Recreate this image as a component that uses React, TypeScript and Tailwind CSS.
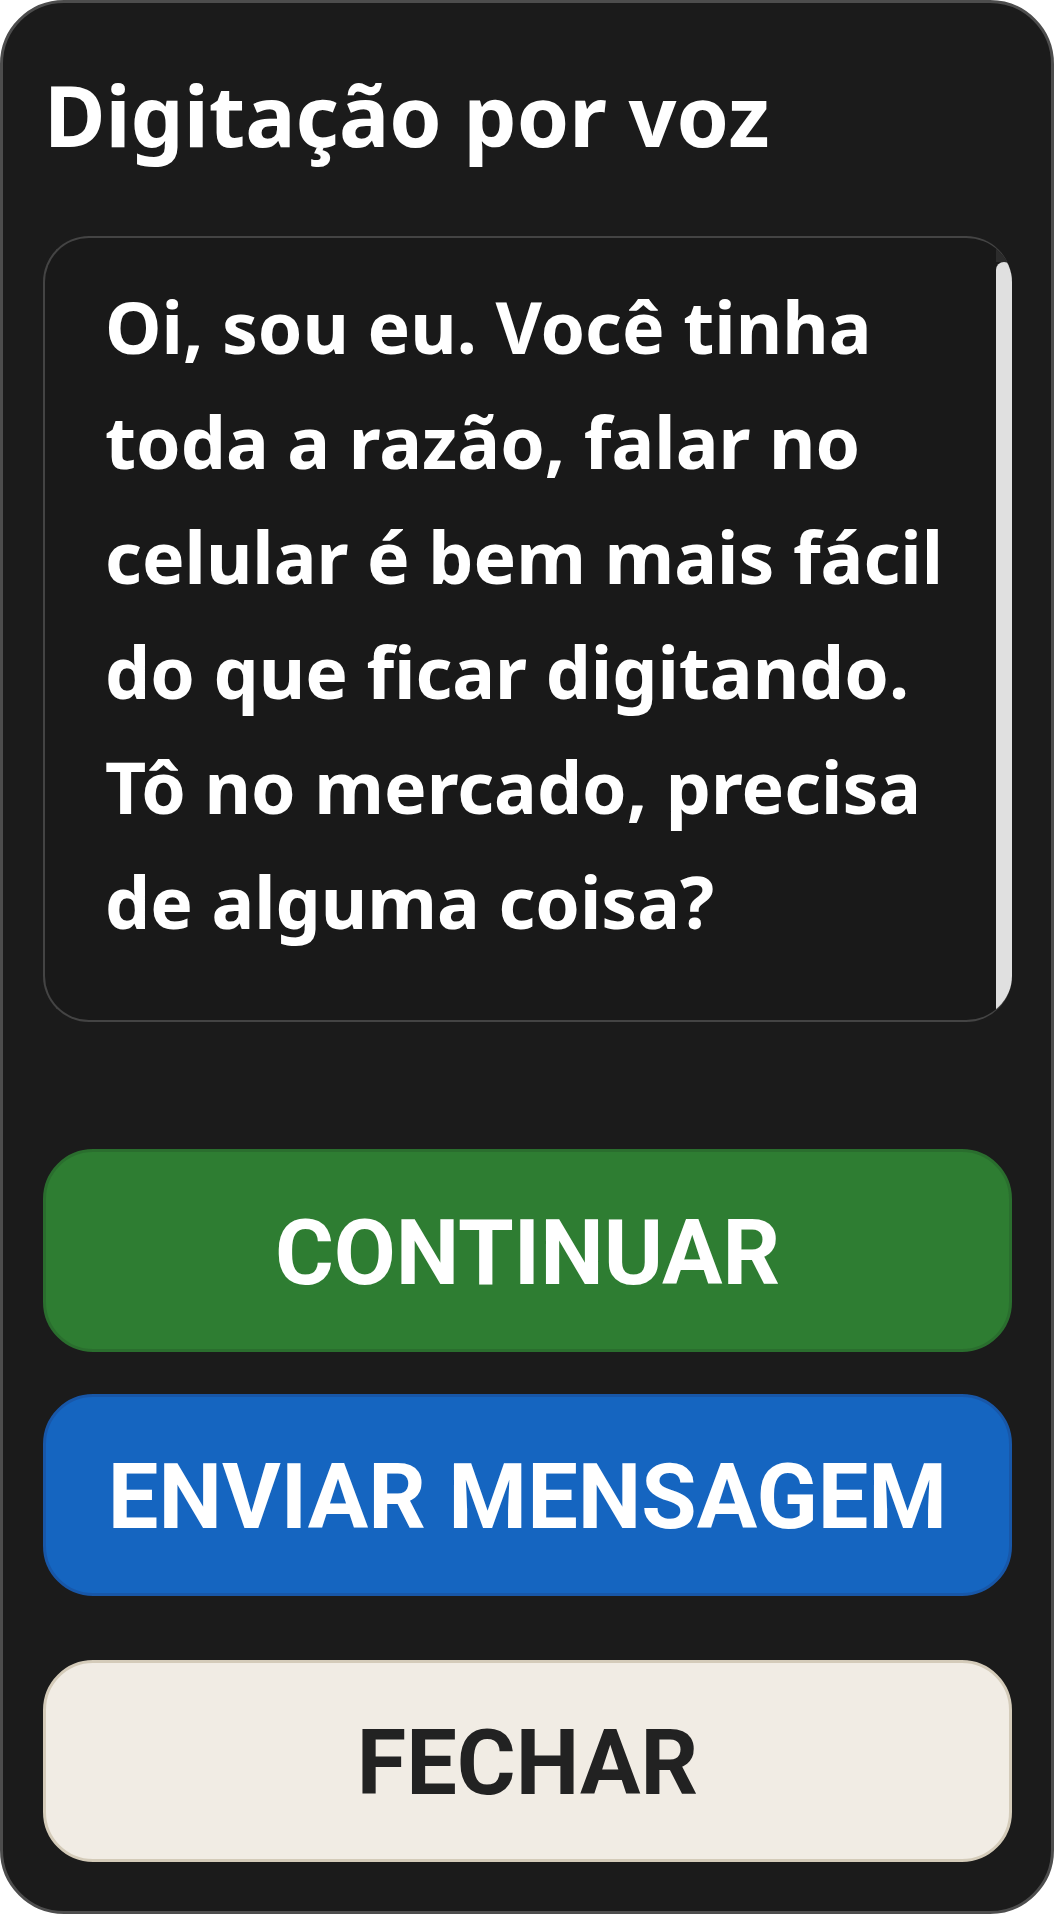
export default function App() {
    const lines = [
        "Oi, sou eu. Você tinha",
        "toda a razão, falar no",
        "celular é bem mais fácil",
        "do que ficar digitando.",
        "Tô no mercado, precisa",
        "de alguma coisa?",
    ];

    return (
        <div className="w-[1054px] h-[1916px] bg-white">
            <div className="w-[1054px] h-[1914px] rounded-[64px] border-[3px] border-[#4d4d4d] bg-[#1b1b1b] pl-[40px] pr-[39px] pt-[62px] flex flex-col font-['Noto_Sans',sans-serif]">
                <h1 className="text-[84px] leading-[100px] font-bold text-white pl-[1px]">Digitação por voz</h1>

                <div className="mt-[71px] h-[786px] flex rounded-[46px] border-y-2 border-l-2 border-r-0 border-[#444444] bg-[#191919] overflow-hidden">
                    <div className="flex-1 pl-[60px] pt-[31px] text-[71.5px] leading-[115px] font-bold text-white whitespace-nowrap">
                        {lines.map((line) => (
                            <div key={line}>{line}</div>
                        ))}
                    </div>
                    <div className="w-[16px] flex flex-col">
                        <div className="h-[24px] bg-[#2c2c2c]" />
                        <div className="flex-1 bg-[#e0e0e0] rounded-t-full" />
                    </div>
                </div>

                <div className="mt-[127px] flex flex-col font-['Roboto',sans-serif] font-bold text-[90px] leading-none">
                    <button className="h-[203px] rounded-[50px] border-[3px] border-[#2a6e2e] bg-[#2e7d32] text-white flex items-center justify-center pt-[6px]">
                        CONTINUAR
                    </button>
                    <button className="mt-[42px] h-[202px] rounded-[50px] border-[3px] border-[#1857a8] bg-[#1565c0] text-white flex items-center justify-center pt-[6px]">
                        ENVIAR MENSAGEM
                    </button>
                    <button className="mt-[64px] h-[202px] rounded-[50px] border-[3px] border-[#d4cbb9] bg-[#f1ece4] text-[#222222] flex items-center justify-center pt-[6px]">
                        FECHAR
                    </button>
                </div>
            </div>
        </div>
    );
}
